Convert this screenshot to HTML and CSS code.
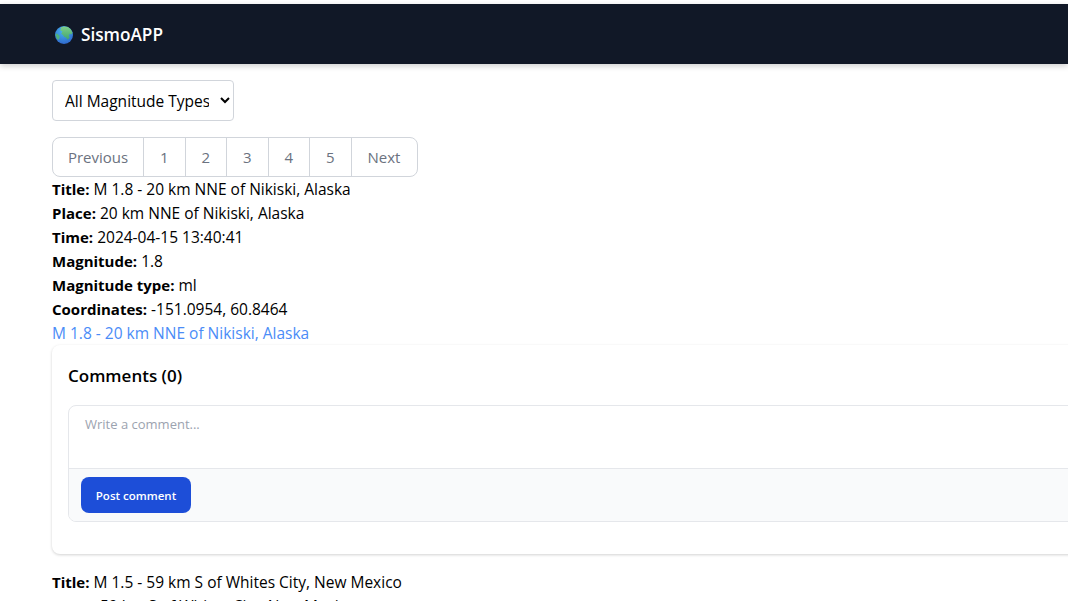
FILE: index.html
```html
<!DOCTYPE html>
<html lang="en">
<head>
<meta charset="utf-8">
<title>SismoAPP</title>
<link rel="stylesheet" href="styles.css">
</head>
<body>
<nav class="navbar">
  <svg class="logo" viewBox="0 0 18 18" width="18" height="18" aria-hidden="true">
    <defs>
      <radialGradient id="ocean" cx="45%" cy="30%" r="80%">
        <stop offset="0" stop-color="#47b4f0"/>
        <stop offset="1" stop-color="#2c5fc8"/>
      </radialGradient>
      <linearGradient id="land" x1="0" y1="0" x2="0" y2="1">
        <stop offset="0" stop-color="#7fd08a"/>
        <stop offset="1" stop-color="#3fa46f"/>
      </linearGradient>
    </defs>
    <circle cx="9" cy="9" r="9" fill="url(#ocean)"/>
    <path d="M6 1.2 9 .4 13 1 16 3.4 17.6 7 16.2 8.6 14.8 7.8 13.8 9.4 14.6 11.8 12.6 13.8 11 11.6 9 10.8 8 9 6.2 7.8 7.4 5.6 5.4 4.6Z" fill="url(#land)"/>
    <path d="M.6 7.6 2.8 8 4.6 10 4.4 12.4 3 14C1.4 12.2.4 10 .6 7.6Z" fill="#4fb07c"/>
  </svg>
  <span class="brand">SismoAPP</span>
</nav>
<main class="content">
  <select class="filter">
    <option>All Magnitude Types</option>
  </select>
  <ul class="pagination">
    <li class="page prev">Previous</li>
    <li class="page">1</li>
    <li class="page">2</li>
    <li class="page">3</li>
    <li class="page">4</li>
    <li class="page">5</li>
    <li class="page next">Next</li>
  </ul>
  <article class="quake">
    <p class="row"><strong>Title:</strong> M 1.8 - 20 km NNE of Nikiski, Alaska</p>
    <p class="row"><strong>Place:</strong> 20 km NNE of Nikiski, Alaska</p>
    <p class="row"><strong>Time:</strong> 2024-04-15 13:40:41</p>
    <p class="row"><strong>Magnitude:</strong> 1.8</p>
    <p class="row"><strong>Magnitude type:</strong> ml</p>
    <p class="row"><strong>Coordinates:</strong> -151.0954, 60.8464</p>
    <a class="link" href="#">M 1.8 - 20 km NNE of Nikiski, Alaska</a>
    <section class="card">
      <h2 class="card-title">Comments (0)</h2>
      <form class="comment-form">
        <div class="comment-input">Write a comment...</div>
        <div class="comment-actions">
          <button class="submit" type="button">Post comment</button>
        </div>
      </form>
    </section>
  </article>
  <article class="quake">
    <p class="row"><strong>Title:</strong> M 1.5 - 59 km S of Whites City, New Mexico</p>
    <p class="row"><strong>Place:</strong> 59 km S of Whites City, New Mexico</p>
  </article>
</main>
</body>
</html>
```
FILE: styles.css
```css
* { box-sizing: border-box; }
html, body { margin: 0; height: 601px; overflow: hidden; background: #fff; }
body {
  padding-top: 4px;
  font-family: "Open Sans", "Noto Sans", sans-serif;
  font-size: 15.5px;
  line-height: 24px;
  color: #000;
}
.navbar {
  display: flex;
  align-items: center;
  gap: 8px;
  height: 60px;
  padding: 2px 0 0 55px;
  background: #111827;
  box-shadow: 0 2px 6px rgba(0,0,0,.2);
}
.logo { flex: none; }
.brand { color: #fff; font-size: 17.2px; font-weight: 600; }
.content { padding: 16px 0 0 52px; width: 1100px; }
.filter {
  display: block;
  width: 182px;
  height: 41px;
  padding: 0 8px;
  border: 1px solid #d1d5db;
  border-radius: 4px;
  background: #fff;
  font: inherit;
  color: #000;
}
.pagination {
  display: inline-flex;
  height: 40px;
  margin: 16px 0 0;
  padding: 0;
  list-style: none;
  vertical-align: top;
  border: 1px solid #d1d5db;
  border-radius: 8px;
  font-size: 15px;
  color: #6b7280;
}
.page {
  display: flex;
  align-items: center;
  justify-content: center;
  width: 41.5px;
  border-left: 1px solid #d1d5db;
}
.prev { width: 90px; border-left: 0; }
.next { width: 66px; }
.quake { display: block; }
.row { margin: 0; }
.row strong { font-size: 15px; font-weight: 700; }
.link { display: block; color: #4b8cf7; text-decoration: none; }
.card {
  height: 209px;
  margin-bottom: 16px;
  padding: 16px;
  border-radius: 8px;
  background: #fff;
  box-shadow: 0 1px 3px rgba(0,0,0,.18);
}
.card-title { margin: 2px 0 16px; font-size: 17px; line-height: 26px; font-weight: 600; }
.comment-form {
  height: 117px;
  border: 1px solid #e5e7eb;
  border-radius: 8px;
  overflow: hidden;
}
.comment-input {
  height: 62px;
  padding: 6px 16px;
  font-size: 13px;
  color: #9ca3af;
}
.comment-actions {
  height: 53px;
  padding: 8px 12px;
  border-top: 1px solid #e5e7eb;
  background: #f9fafb;
}
.submit {
  display: block;
  width: 110px;
  height: 36px;
  border: 0;
  border-radius: 8px;
  background: #1d4ed8;
  color: #fff;
  font: 600 11.5px/36px "Open Sans", "Noto Sans", sans-serif;
}
```
